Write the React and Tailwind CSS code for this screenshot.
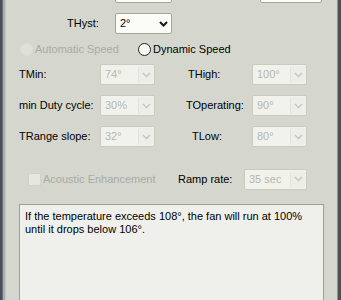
import React from "react";

const font = { fontFamily: '"Liberation Sans", Arial, sans-serif' };

function Chevron({ disabled }) {
  return (
    <svg width="9" height="6" viewBox="0 0 9 6" className="block">
      <polyline
        points="1,1 4.5,4.5 8,1"
        fill="none"
        stroke={disabled ? "#c4c6bd" : "#1a1a1a"}
        strokeWidth={disabled ? "1.3" : "2"}
      />
    </svg>
  );
}

function Select({ value, disabled, w = "w-[55px]" }) {
  if (disabled) {
    return (
      <div className={`${w} h-[21px] shrink-0 flex items-center rounded-[2px] border border-[#c9cbc1] bg-[#f1f2ec]`}>
        <span className="flex-1 pl-[4px] text-[11px] text-[#b5b7ae] leading-none">{value}</span>
        <div className="w-[15px] h-[17px] mr-[1px] flex items-center justify-center rounded-[2px] bg-[#eceee7] border-l border-[#e2e4dc]">
          <Chevron disabled />
        </div>
      </div>
    );
  }
  return (
    <div className={`${w} h-[21px] shrink-0 flex items-center rounded-[2px] border border-[#a3a59c] bg-[#fbfbf8]`}>
      <span className="flex-1 pl-[4px] text-[11px] text-black leading-none">{value}</span>
      <div className="w-[16px] flex items-center justify-center">
        <Chevron />
      </div>
    </div>
  );
}

export default function App() {
  return (
    <div className="w-[341px] h-[300px] overflow-hidden flex bg-[#d5d7cf]" style={font}>
      <div className="w-[6px] h-full flex shrink-0">
        <div className="w-[2px] bg-[#4b4f57]" />
        <div className="w-[1px] bg-[#6b7078]" />
        <div className="w-[2px] bg-[#a9aeb1]" />
        <div className="w-[1px] bg-[#c6cac2]" />
      </div>
      <div className="flex-1 flex flex-col min-w-0">
        {/* cut-off top row */}
        <div className="h-[21px] mt-[-18px] flex shrink-0">
          <div className="ml-[109px] w-[57px] h-[21px] rounded-[2px] border border-[#a3a59c] bg-[#fbfbf8]" />
          <div className="ml-[88px] w-[62px] h-[21px] rounded-[2px] border border-[#a3a59c] bg-[#fbfbf8]" />
        </div>
        {/* THyst */}
        <div className="mt-[10px] h-[21px] flex items-center shrink-0">
          <span className="ml-[61px] w-[48px] text-[11px] text-black">THyst:</span>
          <Select value="2°" w="w-[57px]" />
        </div>
        {/* radio row */}
        <div className="mt-[9px] h-[13px] flex items-center shrink-0">
          <div className="ml-[14px] w-[13px] h-[13px] shrink-0 rounded-full border border-[#dcded6] bg-[#dfe1d9]" />
          <span className="ml-[2px] w-[103px] shrink-0 whitespace-nowrap text-[11px] text-[#a9aba2]">Automatic Speed</span>
          <div className="w-[13px] h-[13px] shrink-0 rounded-full border border-[#1f1f1f] bg-[#f7f7f4]" />
          <span className="ml-[2px] whitespace-nowrap text-[11px] text-black">Dynamic Speed</span>
        </div>
        {/* TMin / THigh */}
        <div className="mt-[8px] h-[21px] flex items-center shrink-0">
          <span className="ml-[13px] w-[81px] text-[11px] text-black">TMin:</span>
          <Select value="74°" disabled />
          <span className="ml-[33px] w-[64px] text-[11px] text-black">THigh:</span>
          <Select value="100°" disabled />
        </div>
        {/* min duty / TOperating */}
        <div className="mt-[10px] h-[21px] flex items-center shrink-0">
          <span className="ml-[13px] w-[81px] text-[11px] text-black">min Duty cycle:</span>
          <Select value="30%" disabled />
          <span className="ml-[31px] w-[66px] text-[11px] text-black">TOperating:</span>
          <Select value="90°" disabled />
        </div>
        {/* TRange / TLow */}
        <div className="mt-[10px] h-[21px] flex items-center shrink-0">
          <span className="ml-[13px] w-[81px] text-[11px] text-black">TRange slope:</span>
          <Select value="32°" disabled />
          <span className="ml-[37px] w-[60px] text-[11px] text-black">TLow:</span>
          <Select value="80°" disabled />
        </div>
        {/* Acoustic / Ramp */}
        <div className="mt-[21px] h-[22px] flex items-center shrink-0">
          <div className="ml-[22px] w-[13px] h-[13px] shrink-0 border border-[#cfd1c8] bg-[#e6e8e0]" />
          <span className="ml-[2px] w-[135px] shrink-0 whitespace-nowrap text-[11px] text-[#a9aba2]">Acoustic Enhancement</span>
          <span className="w-[66px] shrink-0 text-[11px] text-black">Ramp rate:</span>
          <Select value="35 sec" disabled w="w-[63px]" />
        </div>
        {/* textarea */}
        <div className="mt-[14px] ml-[13px] w-[305px] flex-1 border border-[#9c9e98] border-b-0 bg-[#eff0ec] px-[5px] pt-[5px] shrink-0">
          <p className="text-[11px] leading-[13px] text-black">
            If the temperature exceeds 108°, the fan will run at 100% until it drops below 106°.
          </p>
        </div>
      </div>
      <div className="w-[4px] h-full flex shrink-0">
        <div className="w-[1px] bg-[#8f949a]" />
        <div className="w-[3px] bg-[#4b4f57]" />
      </div>
    </div>
  );
}
